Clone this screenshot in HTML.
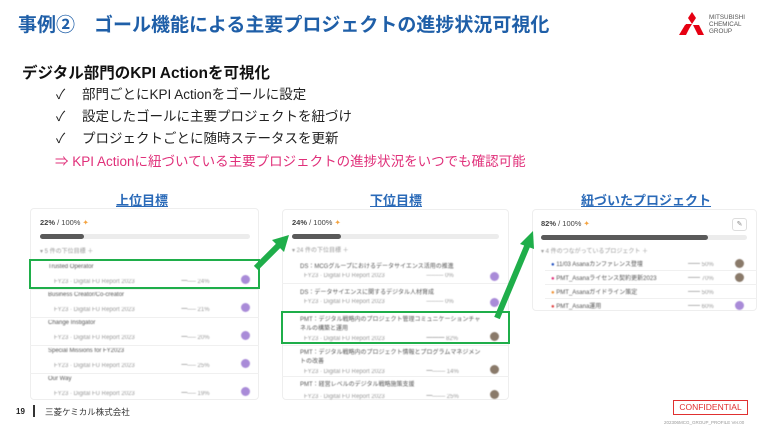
<!DOCTYPE html>
<html><head><meta charset="utf-8"><style>
*{margin:0;padding:0;box-sizing:border-box}
body{width:765px;height:431px;background:#fff;position:relative;overflow:hidden;font-family:"Liberation Sans","Noto Sans CJK JP",sans-serif}
.a{position:absolute;white-space:nowrap}
.title{left:18px;top:10px;font-size:19px;font-weight:bold;color:#1f5fa8}
.sub{left:22px;top:61px;font-size:15.5px;font-weight:bold;color:#111}
.b{font-size:13.5px;color:#222}
.hd{font-size:13px;font-weight:bold;color:#2a6ab8;text-decoration:underline}
.panel{position:absolute;border:1px solid #eee;border-radius:4px;background:#fff}
.pct{font-size:7.5px;color:#444}
.bar{position:absolute;height:5px;background:#ececec;border-radius:3px}
.bar i{display:block;height:5px;background:#5a5a5a;border-radius:3px}
.bl{font-size:6px;color:#999;filter:blur(0.5px)}
.rt{font-size:6px;color:#555;filter:blur(0.5px)}
.sep{position:absolute;height:1px;background:#f0f0f0}
.dot{position:absolute;width:9px;height:9px;border-radius:50%;background:#a98bd8;filter:blur(0.4px)}
.dotb{background:#8a7a6a}
.gb{position:absolute;border:2px solid #1fae4a}
</style></head><body>
<div class="a title">事例②　ゴール機能による主要プロジェクトの進捗状況可視化</div>
<svg class="a" style="left:678px;top:12px" width="30" height="26" viewBox="0 0 30 26"><polygon points="14,0 18,6 14,12 10,6" fill="#e60012"/><polygon points="14,12 8,12 3,20 9,20" fill="#e60012" transform="translate(0,0)"/><polygon points="9,14 15,14 10,24 3,24" fill="#e60012" transform="translate(-2,-1)"/><polygon points="15,13 21,13 26,23 20,23" fill="#e60012"/></svg>
<div class="a" style="left:709px;top:14px;font-size:6.3px;line-height:7px;color:#555">MITSUBISHI<br>CHEMICAL<br>GROUP</div>
<div class="a sub">デジタル部門のKPI Actionを可視化</div>
<div class="a b" style="left:56px;top:83px">✓</div><div class="a b" style="left:82px;top:83px">部門ごとにKPI Actionをゴールに設定</div>
<div class="a b" style="left:56px;top:105px">✓</div><div class="a b" style="left:82px;top:105px">設定したゴールに主要プロジェクトを紐づけ</div>
<div class="a b" style="left:56px;top:127px">✓</div><div class="a b" style="left:82px;top:127px">プロジェクトごとに随時ステータスを更新</div>
<div class="a" style="left:55px;top:150px;font-size:13.5px;color:#e0307a">⇒ KPI Actionに紐づいている主要プロジェクトの進捗状況をいつでも確認可能</div>

<div class="a hd" style="left:116px;top:190px">上位目標</div>
<div class="a hd" style="left:370px;top:190px">下位目標</div>
<div class="a hd" style="left:581px;top:190px">紐づいたプロジェクト</div>

<!-- left panel -->
<div class="panel" style="left:30px;top:208px;width:229px;height:192px"></div>
<div class="a pct" style="left:40px;top:218px"><b>22%</b> / 100% <span style="color:#f4a340">✦</span></div>
<div class="bar" style="left:40px;top:234px;width:210px"><i style="width:44px"></i></div>
<div class="a bl" style="left:40px;top:246px">▾ 5 件の下位目標 ＋</div>
<div class="a rt" style="left:48px;top:264px">Trusted Operator</div><div class="a bl" style="left:54px;top:276px">FY23 · Digital FU Report 2023 &nbsp;&nbsp;&nbsp;&nbsp;&nbsp;&nbsp;&nbsp;&nbsp;&nbsp;&nbsp;&nbsp;&nbsp;&nbsp;&nbsp;&nbsp;&nbsp;&nbsp;&nbsp;&nbsp;&nbsp;&nbsp;&nbsp;&nbsp;&nbsp;&nbsp;&nbsp;&nbsp;━── 24%</div><div class="dot" style="left:241px;top:275px"></div>
<div class="sep" style="left:30px;top:289px;width:229px"></div>
<div class="a rt" style="left:48px;top:292px">Business Creator/Co-creator</div><div class="a bl" style="left:54px;top:304px">FY23 · Digital FU Report 2023 &nbsp;&nbsp;&nbsp;&nbsp;&nbsp;&nbsp;&nbsp;&nbsp;&nbsp;&nbsp;&nbsp;&nbsp;&nbsp;&nbsp;&nbsp;&nbsp;&nbsp;&nbsp;&nbsp;&nbsp;&nbsp;&nbsp;&nbsp;&nbsp;&nbsp;&nbsp;&nbsp;━── 21%</div><div class="dot" style="left:241px;top:303px"></div>
<div class="sep" style="left:30px;top:317px;width:229px"></div>
<div class="a rt" style="left:48px;top:320px">Change Instigator</div><div class="a bl" style="left:54px;top:332px">FY23 · Digital FU Report 2023 &nbsp;&nbsp;&nbsp;&nbsp;&nbsp;&nbsp;&nbsp;&nbsp;&nbsp;&nbsp;&nbsp;&nbsp;&nbsp;&nbsp;&nbsp;&nbsp;&nbsp;&nbsp;&nbsp;&nbsp;&nbsp;&nbsp;&nbsp;&nbsp;&nbsp;&nbsp;&nbsp;━── 20%</div><div class="dot" style="left:241px;top:331px"></div>
<div class="sep" style="left:30px;top:345px;width:229px"></div>
<div class="a rt" style="left:48px;top:348px">Special Missions for FY2023</div><div class="a bl" style="left:54px;top:360px">FY23 · Digital FU Report 2023 &nbsp;&nbsp;&nbsp;&nbsp;&nbsp;&nbsp;&nbsp;&nbsp;&nbsp;&nbsp;&nbsp;&nbsp;&nbsp;&nbsp;&nbsp;&nbsp;&nbsp;&nbsp;&nbsp;&nbsp;&nbsp;&nbsp;&nbsp;&nbsp;&nbsp;&nbsp;&nbsp;━── 25%</div><div class="dot" style="left:241px;top:359px"></div>
<div class="sep" style="left:30px;top:373px;width:229px"></div>
<div class="a rt" style="left:48px;top:376px">Our Way</div><div class="a bl" style="left:54px;top:388px">FY23 · Digital FU Report 2023 &nbsp;&nbsp;&nbsp;&nbsp;&nbsp;&nbsp;&nbsp;&nbsp;&nbsp;&nbsp;&nbsp;&nbsp;&nbsp;&nbsp;&nbsp;&nbsp;&nbsp;&nbsp;&nbsp;&nbsp;&nbsp;&nbsp;&nbsp;&nbsp;&nbsp;&nbsp;&nbsp;━── 19%</div><div class="dot" style="left:241px;top:387px"></div>
<div class="gb" style="left:29px;top:259px;width:231px;height:30px"></div>

<!-- middle panel -->
<div class="panel" style="left:282px;top:209px;width:227px;height:191px"></div>
<div class="a pct" style="left:292px;top:218px"><b>24%</b> / 100% <span style="color:#f4a340">✦</span></div>
<div class="bar" style="left:292px;top:234px;width:207px"><i style="width:49px"></i></div>
<div class="a bl" style="left:292px;top:245px">▾ 24 件の下位目標 ＋</div>
<div class="a rt" style="left:300px;top:261px">DS：MCGグループにおけるデータサイエンス活用の推進</div><div class="a bl" style="left:304px;top:273px">FY23 · Digital FU Report 2023 &nbsp;&nbsp;&nbsp;&nbsp;&nbsp;&nbsp;&nbsp;&nbsp;&nbsp;&nbsp;&nbsp;&nbsp;&nbsp;&nbsp;&nbsp;&nbsp;&nbsp;&nbsp;&nbsp;&nbsp;&nbsp;&nbsp;&nbsp;&nbsp;──── 0%</div><div class="dot" style="left:490px;top:272px"></div>
<div class="sep" style="left:282px;top:283px;width:227px"></div>
<div class="a rt" style="left:300px;top:287px">DS：データサイエンスに関するデジタル人材育成</div><div class="a bl" style="left:304px;top:299px">FY23 · Digital FU Report 2023 &nbsp;&nbsp;&nbsp;&nbsp;&nbsp;&nbsp;&nbsp;&nbsp;&nbsp;&nbsp;&nbsp;&nbsp;&nbsp;&nbsp;&nbsp;&nbsp;&nbsp;&nbsp;&nbsp;&nbsp;&nbsp;&nbsp;&nbsp;&nbsp;──── 0%</div><div class="dot" style="left:490px;top:298px"></div>
<div class="a rt" style="left:300px;top:314px">PMT：デジタル戦略内のプロジェクト管理コミュニケーションチャ<br>ネルの構築と運用</div><div class="a bl" style="left:304px;top:333px">FY23 · Digital FU Report 2023 &nbsp;&nbsp;&nbsp;&nbsp;&nbsp;&nbsp;&nbsp;&nbsp;&nbsp;&nbsp;&nbsp;&nbsp;&nbsp;&nbsp;&nbsp;&nbsp;&nbsp;&nbsp;&nbsp;&nbsp;&nbsp;&nbsp;&nbsp;&nbsp;━━━ 82%</div><div class="dot dotb" style="left:490px;top:332px"></div>
<div class="sep" style="left:282px;top:345px;width:227px"></div>
<div class="a rt" style="left:300px;top:347px">PMT：デジタル戦略内のプロジェクト情報とプログラムマネジメン<br>トの改善</div><div class="a bl" style="left:304px;top:366px">FY23 · Digital FU Report 2023 &nbsp;&nbsp;&nbsp;&nbsp;&nbsp;&nbsp;&nbsp;&nbsp;&nbsp;&nbsp;&nbsp;&nbsp;&nbsp;&nbsp;&nbsp;&nbsp;&nbsp;&nbsp;&nbsp;&nbsp;&nbsp;&nbsp;&nbsp;&nbsp;━─── 14%</div><div class="dot dotb" style="left:490px;top:365px"></div>
<div class="sep" style="left:282px;top:376px;width:227px"></div>
<div class="a rt" style="left:300px;top:379px">PMT：経営レベルのデジタル戦略施策支援</div><div class="a bl" style="left:304px;top:391px">FY23 · Digital FU Report 2023 &nbsp;&nbsp;&nbsp;&nbsp;&nbsp;&nbsp;&nbsp;&nbsp;&nbsp;&nbsp;&nbsp;&nbsp;&nbsp;&nbsp;&nbsp;&nbsp;&nbsp;&nbsp;&nbsp;&nbsp;&nbsp;&nbsp;&nbsp;&nbsp;━─── 25%</div><div class="dot dotb" style="left:490px;top:390px"></div>
<div class="gb" style="left:281px;top:311px;width:229px;height:33px"></div>

<!-- right panel -->
<div class="panel" style="left:532px;top:209px;width:225px;height:102px"></div>
<div class="a pct" style="left:541px;top:219px"><b>82%</b> / 100% <span style="color:#f4a340">✦</span></div>
<div style="position:absolute;left:732px;top:218px;width:15px;height:13px;border:1px solid #ddd;border-radius:3px;font-size:7px;color:#888;text-align:center;line-height:11px">✎</div>
<div class="bar" style="left:541px;top:235px;width:206px"><i style="width:167px"></i></div>
<div class="a bl" style="left:541px;top:246px">▾ 4 件のつながっているプロジェクト ＋</div>
<div class="a rt" style="left:551px;top:259px"><span style="color:#2050c0">●</span> 11/03 Asanaカンファレンス登壇</div>
<div class="a rt" style="left:551px;top:273px"><span style="color:#e0307a">●</span> PMT_Asanaライセンス契約更新2023</div>
<div class="a rt" style="left:551px;top:287px"><span style="color:#f09030">●</span> PMT_Asanaガイドライン策定</div>
<div class="a rt" style="left:551px;top:301px"><span style="color:#e04040">●</span> PMT_Asana運用</div>
<div class="a bl" style="left:688px;top:259px">━━ 50%</div><div class="a bl" style="left:688px;top:273px">━━ 70%</div><div class="a bl" style="left:688px;top:287px">━━ 50%</div><div class="a bl" style="left:688px;top:301px">━━ 60%</div>
<div class="dot dotb" style="left:735px;top:259px"></div><div class="dot dotb" style="left:735px;top:273px"></div><div class="dot" style="left:735px;top:301px"></div>
<div class="sep" style="left:545px;top:270px;width:212px"></div><div class="sep" style="left:545px;top:284px;width:212px"></div><div class="sep" style="left:545px;top:298px;width:212px"></div>

<!-- arrows -->
<svg class="a" style="left:0;top:0" width="765" height="431">
<line x1="256" y1="268" x2="280" y2="244" stroke="#1fae4a" stroke-width="6"/>
<polygon points="289,235 272,240 284,252" fill="#1fae4a"/>
<line x1="497" y1="318" x2="528" y2="244" stroke="#1fae4a" stroke-width="6"/>
<polygon points="533,231 520,244 534,249" fill="#1fae4a"/>
</svg>

<div class="a" style="left:16px;top:407px;font-size:8px;font-weight:bold;color:#222">19</div>
<div class="a" style="left:33px;top:405px;width:2px;height:12px;background:#333"></div>
<div class="a" style="left:45px;top:406px;font-size:8.5px;color:#333">三菱ケミカル株式会社</div>
<div class="a" style="left:673px;top:400px;width:75px;height:15px;border:1px solid #e03030;color:#e03030;font-size:8.5px;text-align:center;line-height:13px">CONFIDENTIAL</div>
<div class="a" style="left:664px;top:420px;font-size:4.5px;color:#999">202306MCG_GROUP_PROFILE Ver.00</div>
</body></html>
